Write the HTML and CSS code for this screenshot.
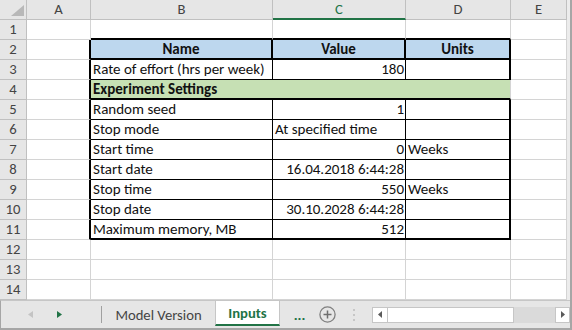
FILE: index.html
```html
<!DOCTYPE html>
<html lang="en">
<head>
    <meta charset="UTF-8">
    <title>Inputs</title>
    <link rel="stylesheet" href="styles.css">
</head>
<body>
    <div class="window">
        <div class="sheet">
            <div class="h corner">
                <svg width="26" height="19" viewBox="0 0 26 19"><polygon points="24,5 24,16 11,16" fill="#b8b8b8"/></svg>
            </div>
            <div class="h">A</div>
            <div class="h">B</div>
            <div class="h sel">C</div>
            <div class="h">D</div>
            <div class="h">E</div>

            <div class="h rh">1</div>
            <div class="c"></div>
            <div class="c edge-t"></div>
            <div class="c edge-t"></div>
            <div class="c edge-t"></div>
            <div class="c"></div>

            <div class="h rh">2</div>
            <div class="c edge-l"></div>
            <div class="c hd">Name</div>
            <div class="c hd">Value</div>
            <div class="c hd">Units</div>
            <div class="c"></div>

            <div class="h rh">3</div>
            <div class="c edge-l"></div>
            <div class="c in">Rate of effort (hrs per week)</div>
            <div class="c in num">180</div>
            <div class="c out"></div>
            <div class="c"></div>

            <div class="h rh">4</div>
            <div class="c edge-l"></div>
            <div class="c section">Experiment Settings</div>
            <div class="c"></div>

            <div class="h rh">5</div>
            <div class="c edge-l"></div>
            <div class="c in">Random seed</div>
            <div class="c in num">1</div>
            <div class="c out"></div>
            <div class="c"></div>

            <div class="h rh">6</div>
            <div class="c edge-l"></div>
            <div class="c in">Stop mode</div>
            <div class="c in">At specified time</div>
            <div class="c out"></div>
            <div class="c"></div>

            <div class="h rh">7</div>
            <div class="c edge-l"></div>
            <div class="c in">Start time</div>
            <div class="c in num">0</div>
            <div class="c out">Weeks</div>
            <div class="c"></div>

            <div class="h rh">8</div>
            <div class="c edge-l"></div>
            <div class="c in">Start date</div>
            <div class="c in num">16.04.2018 6:44:28</div>
            <div class="c out"></div>
            <div class="c"></div>

            <div class="h rh">9</div>
            <div class="c edge-l"></div>
            <div class="c in">Stop time</div>
            <div class="c in num">550</div>
            <div class="c out">Weeks</div>
            <div class="c"></div>

            <div class="h rh">10</div>
            <div class="c edge-l"></div>
            <div class="c in">Stop date</div>
            <div class="c in num">30.10.2028 6:44:28</div>
            <div class="c out"></div>
            <div class="c"></div>

            <div class="h rh">11</div>
            <div class="c edge-l"></div>
            <div class="c in end">Maximum memory, MB</div>
            <div class="c in end num">512</div>
            <div class="c out end"></div>
            <div class="c"></div>

            <div class="h rh">12</div>
            <div class="c"></div>
            <div class="c"></div>
            <div class="c"></div>
            <div class="c"></div>
            <div class="c"></div>

            <div class="h rh">13</div>
            <div class="c"></div>
            <div class="c"></div>
            <div class="c"></div>
            <div class="c"></div>
            <div class="c"></div>

            <div class="h rh">14</div>
            <div class="c"></div>
            <div class="c"></div>
            <div class="c"></div>
            <div class="c"></div>
            <div class="c"></div>
        </div>

        <div class="tabs">
            <div class="nav">
                <svg class="prev" width="5" height="7" viewBox="0 0 5 7"><polygon points="5,0 5,7 0,3.5" fill="#c4c4c4"/></svg>
                <svg class="next" width="5" height="7" viewBox="0 0 5 7"><polygon points="0,0 0,7 5,3.5" fill="#217346"/></svg>
            </div>
            <div class="bar"></div>
            <div class="tab">Model Version</div>
            <div class="tab active">Inputs</div>
            <div class="more">...</div>
            <svg class="add" width="17" height="17" viewBox="0 0 17 17">
                <circle cx="8.5" cy="8.5" r="7.6" fill="none" stroke="#808080" stroke-width="1.3"/>
                <path d="M8.5 4.5v8M4.5 8.5h8" stroke="#6e6e6e" stroke-width="1.5"/>
            </svg>
            <div class="split">
                <svg width="2" height="12" viewBox="0 0 2 12"><rect x="0" y="0" width="2" height="2" fill="#c6c6c6"/><rect x="0" y="5" width="2" height="2" fill="#c6c6c6"/><rect x="0" y="10" width="2" height="2" fill="#c6c6c6"/></svg>
            </div>
            <div class="scroll">
                <div class="btn">
                    <svg width="4" height="7" viewBox="0 0 4 7"><polygon points="4,0 4,7 0,3.5" fill="#5a5a5a"/></svg>
                </div>
                <div class="thumb"></div>
                <div class="track"></div>
                <div class="btn">
                    <svg width="4" height="7" viewBox="0 0 4 7"><polygon points="0,0 0,7 4,3.5" fill="#5a5a5a"/></svg>
                </div>
            </div>
        </div>
    </div>
</body>
</html>
```

FILE: styles.css
```css
* {
    margin: 0;
    padding: 0;
    box-sizing: border-box;
}
body {
    font-family: Carlito, Lato, "Liberation Sans", sans-serif;
    font-size: 14.67px;
    color: #000;
    background: #fff;
}
.window {
    width: 572px;
    height: 330px;
    border-right: 2px solid #a6a6a6;
    display: flex;
    flex-direction: column;
}
.sheet {
    display: grid;
    grid-template-columns: 27px 64px 182px 133px 105px 1fr;
    grid-auto-rows: 20px;
    height: 300px;
    border-right: 3px solid #ececec;
}
.sheet .c,
.sheet .h {
    border-right: 1px solid #d4d4d4;
    border-bottom: 1px solid #d4d4d4;
    line-height: 19px;
    padding: 0 2px;
    white-space: nowrap;
    overflow: hidden;
}
.sheet .c {
    font-size: 15px;
    color: #111;
}
.sheet .h {
    background: #e6e6e6;
    border-color: #c0c0c0;
    color: #444;
    text-align: center;
}
.sheet .corner {
    padding: 0;
}
.sheet .corner svg {
    display: block;
}
.sheet .sel {
    color: #217346;
    border-bottom: 2px solid #217346;
}
.sheet .edge-l {
    border-right: 2px solid #000;
}
.sheet .edge-t {
    border-bottom: 2px solid #000;
}
.sheet .hd {
    background: #bdd7ee;
    font-weight: bold;
    text-align: center;
    border-right: 2px solid #000;
    border-bottom: 2px solid #000;
}
.sheet .in {
    border-right: 1px solid #000;
    border-bottom: 1px solid #000;
}
.sheet .out {
    border-right: 2px solid #000;
    border-bottom: 1px solid #000;
}
.sheet .end {
    border-bottom-width: 2px;
}
.sheet .num {
    text-align: right;
    padding-right: 1px;
}
.sheet .section {
    grid-column: span 3;
    background: #c6e0b4;
    font-weight: bold;
    border-bottom: 2px solid #000;
}

.tabs {
    height: 30px;
    display: flex;
    align-items: center;
    background: #e6e6e6;
    border-top: 1px solid #c6c6c6;
    border-bottom: 2px solid #a6a6a6;
    border-left: 1px solid #a6a6a6;
}
.nav {
    width: 100px;
    display: flex;
    align-items: center;
}
.nav .prev {
    margin-left: 27px;
}
.nav .next {
    margin-left: 24px;
}
.bar {
    width: 1px;
    height: 17px;
    background: #a0a0a0;
}
.tab {
    width: 113px;
    text-align: center;
    color: #444;
    line-height: 24px;
}
.tab.active {
    width: 65px;
    height: 25px;
    align-self: flex-start;
    background: #fff;
    color: #217346;
    font-weight: bold;
    border-left: 1px solid #c6c6c6;
    border-right: 1px solid #c6c6c6;
    border-bottom: 2px solid #217346;
}
.more {
    width: 39px;
    text-align: center;
    color: #217346;
    font-weight: bold;
    line-height: 24px;
}
.add {
    display: block;
}
.split {
    width: 36px;
    display: flex;
    justify-content: center;
}
.split svg {
    display: block;
}
.scroll {
    width: 198px;
    height: 16px;
    display: flex;
}
.scroll .btn {
    width: 16px;
    background: #fff;
    border: 1px solid #c6c6c6;
    display: flex;
    align-items: center;
    justify-content: center;
}
.scroll .btn:last-child {
    width: 15px;
}
.scroll .thumb {
    width: 126px;
    background: #fff;
    border: 1px solid #c6c6c6;
    border-left: none;
}
.scroll .track {
    flex: 1;
    background: #dadada;
}
```
